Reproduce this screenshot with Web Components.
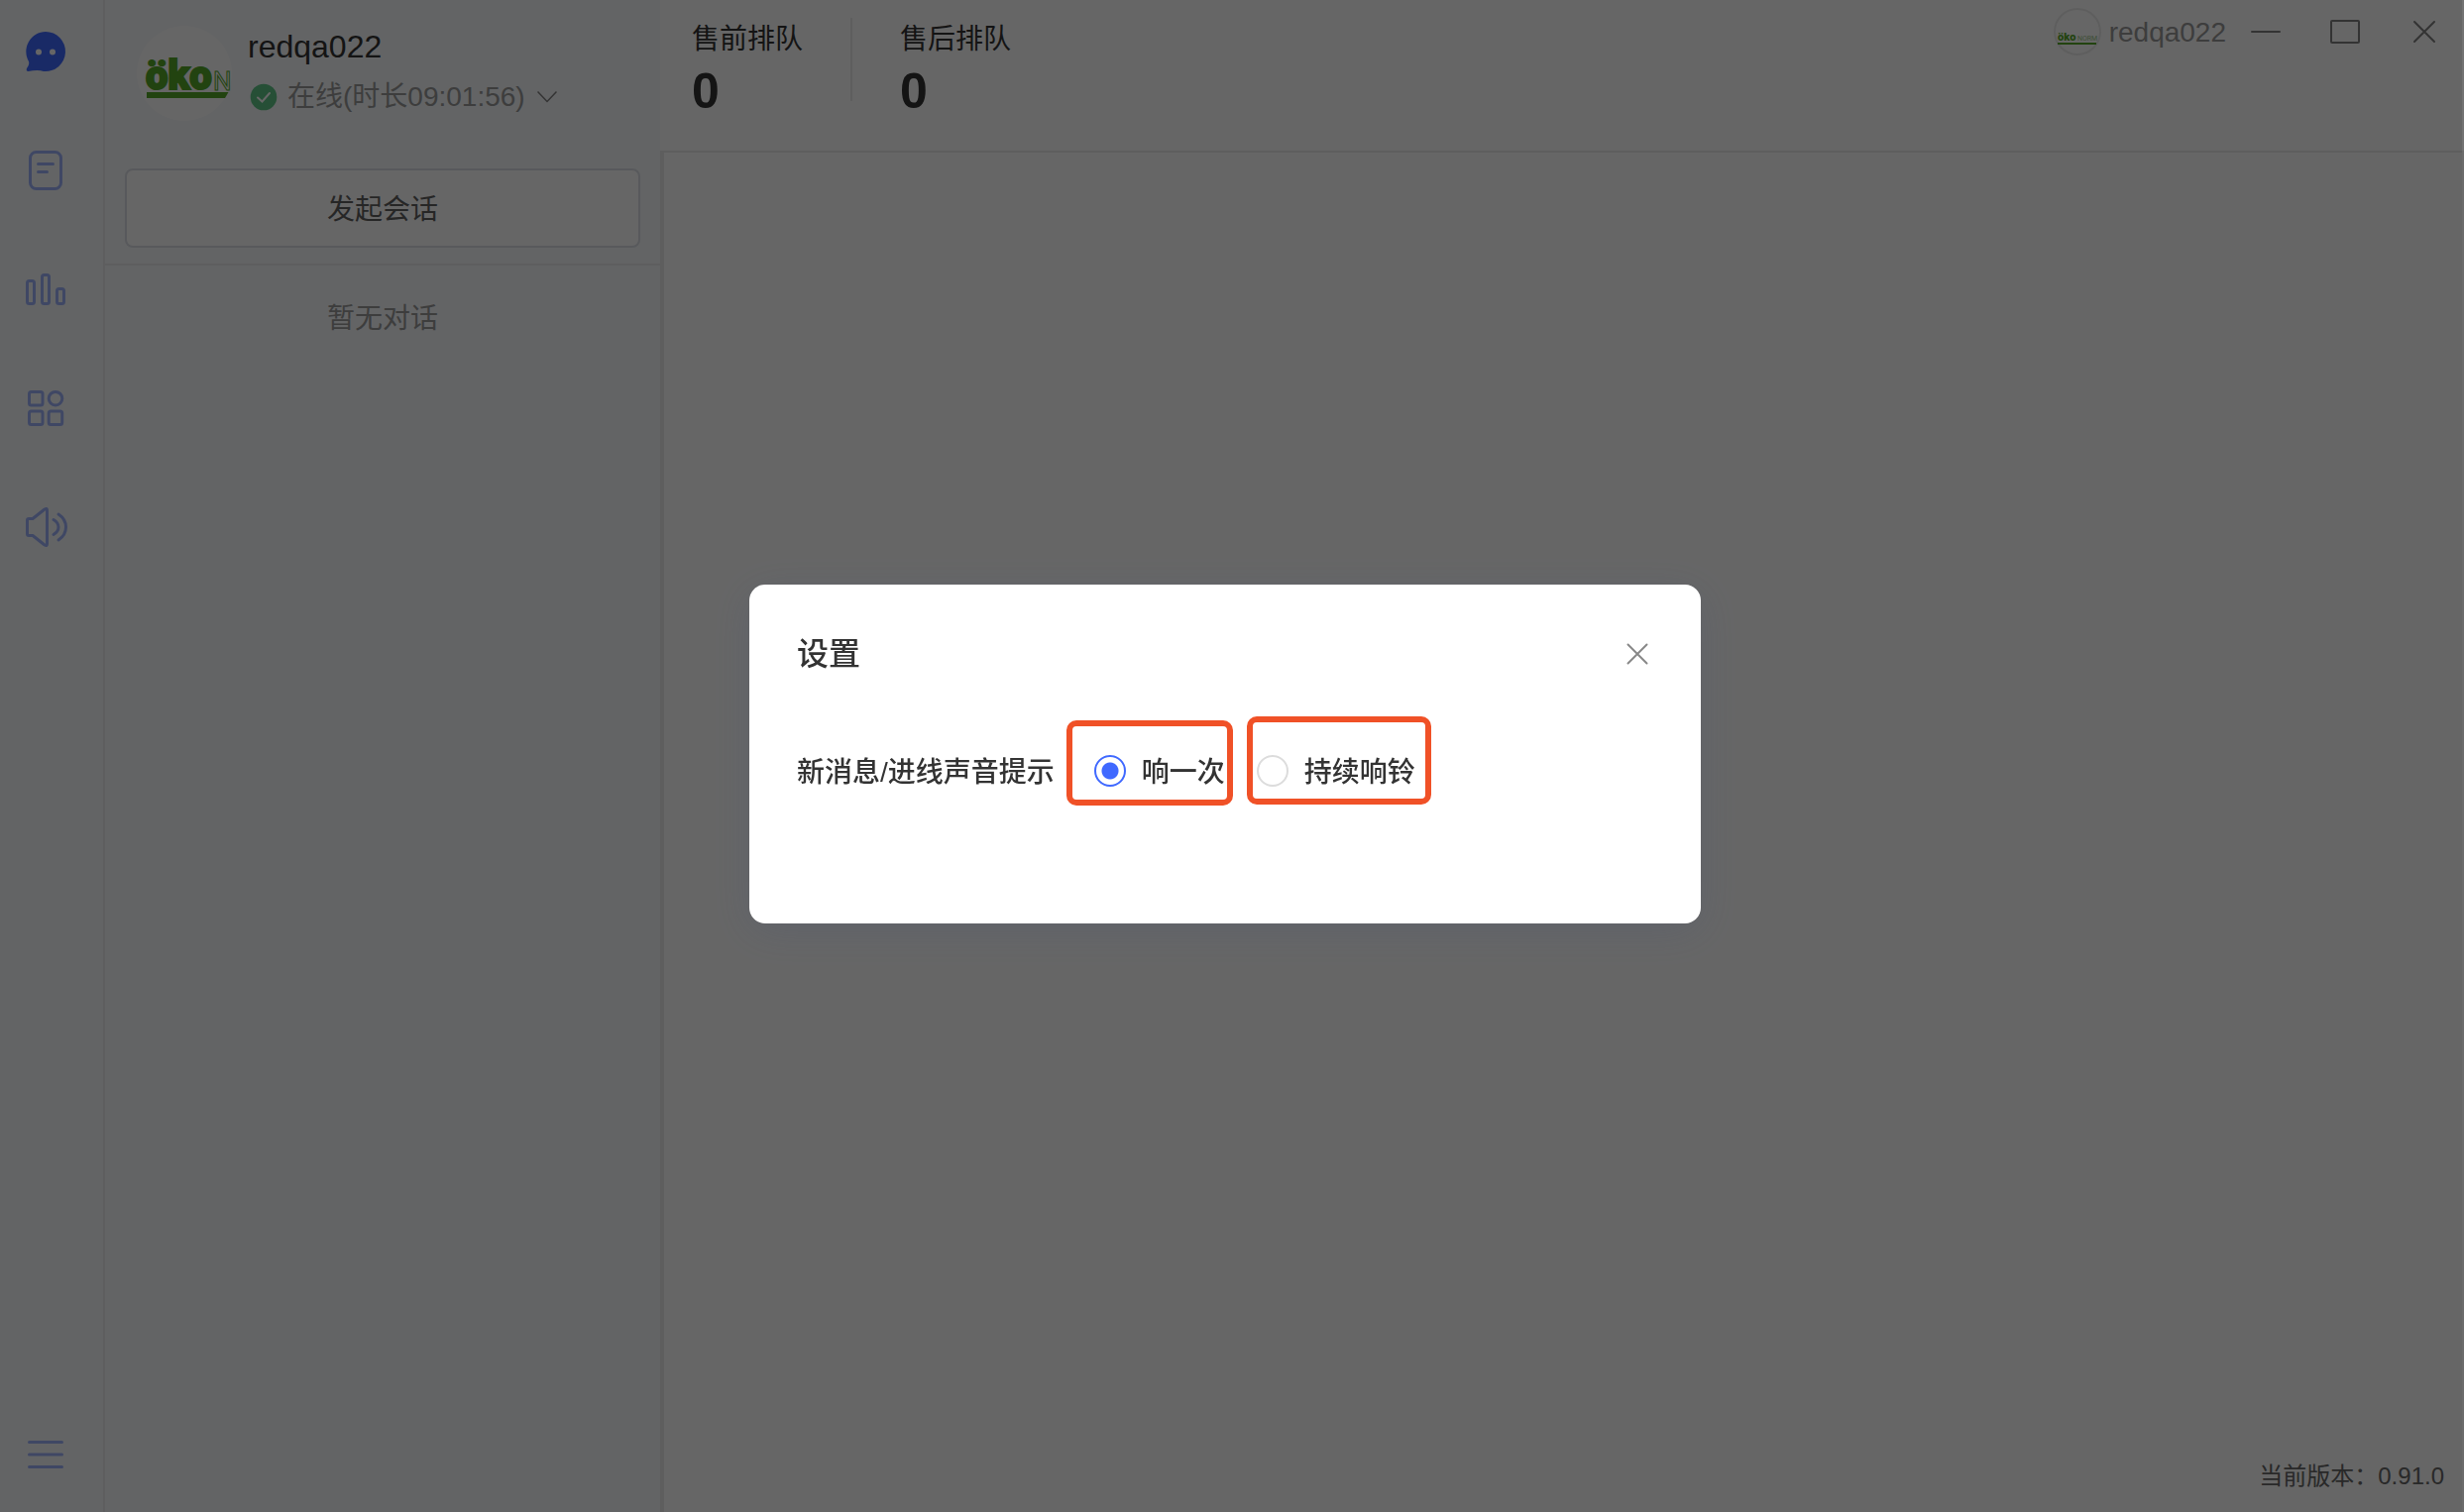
<!DOCTYPE html>
<html lang="zh-CN">
<head>
<meta charset="utf-8">
<title>客服工作台</title>
<style>
html, body { margin: 0; height: 100%; }
body { font-family: "Liberation Sans", "Noto Sans CJK SC", sans-serif; font-size: 28px; line-height: 40px; color: #333; background: #fff; overflow: hidden; }
</style>
</head>
<body>
<desk-app></desk-app>
<script>
const define = (name, html) => {
  const template = document.createElement('template');
  template.innerHTML = '<style>*{box-sizing:border-box}button{font:inherit;color:inherit;margin:0;padding:0;border:0;background:none;cursor:pointer}svg{display:block}</style>' + html;
  customElements.define(name, class extends HTMLElement {
    constructor() {
      super();
      this.attachShadow({ mode: 'open' }).append(template.content.cloneNode(true));
    }
  });
};

define('brand-avatar', `
<style>
:host { display: block; flex: none; width: 96px; height: 96px; border-radius: 50%; background: #fff; }
svg { width: 100%; height: 100%; }
text { font-family: Roboto, "Liberation Sans", sans-serif; fill: #56a82a; }
</style>
<svg viewBox="0 0 96 96" aria-hidden="true">
<text x="9" y="64" font-size="40" font-weight="900" style="stroke:#56a82a;stroke-width:2">öko</text>
<text x="77" y="65" font-size="26" style="fill:none;stroke:#56a82a;stroke-width:1">N</text>
<path d="M10 67H92.500L89 73H10Z" fill="#56a82a"/>
</svg>`);

define('brand-badge', `
<style>
:host { display: block; flex: none; width: 48px; height: 48px; border: 2px solid #ececec; border-radius: 50%; background: #fff; }
svg { width: 44px; height: 44px; }
text { font-family: Roboto, "Liberation Sans", sans-serif; fill: #56a82a; }
</style>
<svg viewBox="0 0 44 44" aria-hidden="true">
<text x="2" y="31" font-size="11" font-weight="900">öko</text>
<text x="22" y="31" font-size="7" style="fill:#9cc78a">NORM</text>
<path d="M2 33H41V35H2Z" fill="#56a82a"/>
</svg>`);

define('nav-rail', `
<style>
:host { display: flex; flex-direction: column; justify-content: space-between; flex: none; width: 106px; padding: 32px 12px 38px 0; border-right: 2px solid #ebebed; }
div { display: flex; flex-direction: column; align-items: center; gap: 80px; }
button { width: 40px; height: 40px; color: #9db2fb; }
svg { width: 40px; height: 40px; overflow: visible; fill: none; stroke: currentColor; stroke-width: 3; stroke-linecap: round; stroke-linejoin: round; }
.active { color: #4069ff; }
</style>
<div>
<button class="active" aria-label="会话"><svg><path d="M20 0a20 20 0 1 1-2 39.900Q12 38 2.500 40Q0 40 1 37Q4 33 3 30A20 20 0 0 1 20 0Z" fill="currentColor" stroke="none"/><circle cx="13" cy="20.500" r="3" fill="#fff" stroke="none"/><circle cx="27" cy="20.500" r="3" fill="#fff" stroke="none"/></svg></button>
<button aria-label="记录"><svg><rect x="4.500" y="1.500" width="31" height="37" rx="6"/><path d="M12.500 13.500h15M12.500 21.500h9"/></svg></button>
<button aria-label="统计"><svg><rect x="1.500" y="11.500" width="7" height="23" rx="2"/><rect x="16.500" y="5.500" width="7" height="29" rx="2"/><rect x="31.500" y="19.500" width="7" height="15" rx="2"/></svg></button>
<button aria-label="应用"><svg><rect x="3.500" y="3.500" width="13.500" height="13.500" rx="2"/><circle cx="30" cy="10.200" r="6.800"/><rect x="3.500" y="23" width="13.500" height="13.500" rx="2"/><rect x="23.200" y="23" width="13.500" height="13.500" rx="2"/></svg></button>
<button aria-label="声音"><svg><path d="M1.500 13q0-1.500 1.500-1.500h4L19 2q2.500-1.500 2.500 1v34q0 2.500-2.500 1L7 28.500H3q-1.500 0-1.500-1.500ZM28 12.500q5 3 5 7.500t-5 7.500M33 7q7.500 5 7.500 13t-7.500 13"/></svg></button>
</div>
<div><button aria-label="菜单"><svg><path d="M3.500 7.500h33M3.500 20h33M3.500 32.500h33"/></svg></button></div>`);

define('agent-profile', `
<style>
:host { display: flex; gap: 16px; padding: 26px 20px 48px 32px; }
.who { display: flex; flex-direction: column; gap: 10px; }
.name { font-size: 32px; line-height: 42px; }
button { display: flex; align-items: center; height: 40px; color: #9a9a9a; }
.ok { width: 28px; height: 28px; margin: 0 10px 0 2px; }
.chevron { width: 20px; height: 12px; margin-left: 12px; }
</style>
<brand-avatar></brand-avatar>
<div class="who">
<span class="name">redqa022</span>
<button><svg class="ok" viewBox="0 0 28 28"><circle cx="14" cy="14" r="13.300" fill="#5fc587"/><path d="M8 14.500l4.500 4L20 10" fill="none" stroke="#fff" stroke-width="2" stroke-linecap="round"/></svg><span>在线(时长09:01:56)</span><svg class="chevron" viewBox="0 0 20 12"><path d="M.5.5l9.500 10L19.500.5" fill="none" stroke="#808080" stroke-width="1.500"/></svg></button>
</div>`);

define('chat-panel', `
<style>
:host { display: flex; flex-direction: column; flex: none; width: 560px; }
.start { padding: 0 20px 16px; border-bottom: 2px solid #ebebed; }
.start button { width: 100%; height: 80px; padding-top: 4px; border: 2px solid #dcdfe6; border-radius: 8px; background: #fff; color: #606060; }
p { margin: 34px 0 0; text-align: center; color: #999; }
</style>
<agent-profile></agent-profile>
<div class="start"><button>发起会话</button></div>
<p>暂无对话</p>`);

define('queue-stat', `
<style>
:host { display: flex; flex-direction: column; gap: 4px; padding-top: 2px; }
.count { font-size: 50px; line-height: 56px; font-weight: 700; }
</style>
<span><slot></slot></span><span class="count"><slot name="count"></slot></span>`);

define('window-controls', `
<style>
:host { display: flex; align-items: center; gap: 40px; }
button { width: 40px; height: 40px; }
svg { width: 40px; height: 40px; fill: none; stroke: #808080; stroke-width: 2; stroke-linecap: round; }
</style>
<button aria-label="最小化"><svg><path d="M6 20h28"/></svg></button>
<button aria-label="最大化"><svg><rect x="6" y="9" width="28" height="22" rx="1"/></svg></button>
<button aria-label="关闭"><svg><path d="M10 10l20 20M30 10L10 30"/></svg></button>`);

define('top-bar', `
<style>
:host { display: flex; justify-content: space-between; align-items: flex-start; height: 154px; border-bottom: 2px solid #ebebeb; }
.stats { display: flex; gap: 48px; padding: 18px 32px; }
.rule { width: 2px; height: 84px; background: #ebebeb; }
.user { display: flex; align-items: center; padding: 8px 20px 0 0; }
.name { margin: 0 20px 0 8px; padding-top: 2px; color: #999; }
</style>
<div class="stats"><queue-stat>售前排队<span slot="count">0</span></queue-stat><span class="rule"></span><queue-stat>售后排队<span slot="count">0</span></queue-stat></div>
<div class="user"><brand-badge></brand-badge><span class="name">redqa022</span><window-controls></window-controls></div>`);

define('work-area', `
<style>
:host { display: flex; flex-direction: column; flex: 1; background: #fff; }
main { display: flex; flex: 1; justify-content: flex-end; align-items: flex-end; padding: 16px 18px; border-left: 4px solid #ebebeb; border-right: 2px solid #ebebeb; color: #666; font-size: 24px; }
</style>
<top-bar></top-bar>
<main><span>当前版本：0.91.0</span></main>`);

define('settings-dialog', `
<style>
:host { position: fixed; inset: 0; box-sizing: border-box; display: flex; align-items: center; justify-content: center; padding: 0 12px 4px 0; border-right: 2px solid rgba(255,255,255,.08); background: rgba(0,0,0,.6); }
section { width: 960px; padding: 48px 48px 134px; border-radius: 16px; background: #fff; box-shadow: 0 8px 40px rgba(64,80,120,.2); font-weight: 500; }
header { display: flex; align-items: center; justify-content: space-between; height: 44px; margin-bottom: 76px; }
h2 { margin: 0; font-size: 32px; font-weight: 500; line-height: 44px; }
header button, header svg { width: 32px; height: 32px; }
header path { fill: none; stroke: #888; stroke-width: 2; stroke-linecap: round; }
fieldset { display: flex; align-items: center; height: 40px; margin: 0; padding: 0; border: 0; gap: 32px; }
.caption { margin-right: 8px; }
.caption, label span { padding-top: 4px; }
label { position: relative; display: flex; align-items: center; gap: 16px; height: 40px; }
input { appearance: none; width: 32px; height: 32px; margin: 0; border: 2px solid #dcdcdc; border-radius: 50%; background: #fff; }
input:checked { border-color: #4069ff; background: radial-gradient(circle, #4069ff 8px, #fff 9px); }
label::after { content: ""; position: absolute; inset: var(--mark); border: 6px solid #f05127; border-radius: 10px; pointer-events: none; }
.once { --mark: -31px -8px -15px -28px; }
.loop { --mark: -35px -16px -14px -10px; }
</style>
<section role="dialog" aria-labelledby="title">
<header><h2 id="title">设置</h2><button aria-label="关闭"><svg><path d="M6.500 6.500l19 19M25.500 6.500l-19 19"/></svg></button></header>
<fieldset aria-labelledby="caption"><span class="caption" id="caption">新消息/进线声音提示</span>
<label class="once"><input type="radio" name="ring" checked><span>响一次</span></label>
<label class="loop"><input type="radio" name="ring"><span>持续响铃</span></label></fieldset>
</section>`);

define('desk-app', `
<style>
:host { display: flex; height: 100vh; background: #f7fafd; }
</style>
<nav-rail></nav-rail><chat-panel></chat-panel><work-area></work-area><settings-dialog></settings-dialog>`);
</script>
</body>
</html>
